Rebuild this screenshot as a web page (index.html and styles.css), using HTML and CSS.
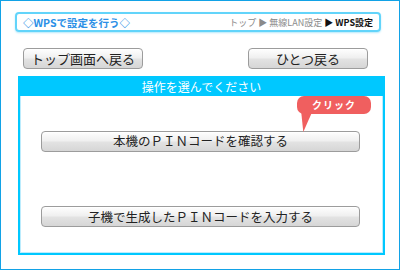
FILE: index.html
```html
<!DOCTYPE html>
<html lang="ja">
  <head>
    <meta charset="UTF-8">
    <title>WPSで設定を行う</title>
    <link rel="stylesheet" href="styles.css">
  </head>
  <body>
    <div class="screen">
      <div class="title-bar">
        <span class="title">◇WPSで設定を行う◇</span>
        <span class="crumbs">トップ ▶ 無線LAN設定 <b>▶ WPS設定</b></span>
      </div>
      <div class="nav">
        <button class="btn small">トップ画面へ戻る</button>
        <button class="btn small">ひとつ戻る</button>
      </div>
      <div class="panel">
        <div class="panel-head">操作を選んでください</div>
        <div class="panel-body">
          <div class="action">
            <button class="btn wide">本機のＰＩＮコードを確認する</button>
            <div class="callout">クリック</div>
          </div>
          <div class="action">
            <button class="btn wide">子機で生成したＰＩＮコードを入力する</button>
          </div>
        </div>
      </div>
    </div>
  </body>
</html>
```
FILE: styles.css
```css
* {padding: 0; margin: 0; box-sizing: border-box}
body {
  font-family: "Noto Sans CJK JP", "Liberation Sans", sans-serif;
  background: #fff;
}
.screen {
  width: 400px;
  height: 270px;
  border: solid 1px #12a2e6;
  padding: 11px 0 0 14px;
}
.title-bar {
  width: 366px;
  height: 20px;
  border: solid 2px #62d4fa;
  border-radius: 4px;
  box-shadow: 0 1px 2px #b5e9fb;
  display: flex;
  align-items: center;
  justify-content: space-between;
  padding: 0 6px 0 6px;
}
.title {
  color: #2a8fe6;
  font-size: 10.5px;
  font-weight: bold;
}
.crumbs {
  color: #8a8a8a;
  font-size: 9px;
}
.crumbs b {
  color: #111;
  font-weight: bold;
}
.nav {
  display: flex;
  justify-content: space-between;
  margin: 16px 0 0 8px;
  width: 345px;
}
.btn {
  font-family: "Noto Sans CJK JP", "Liberation Sans", sans-serif;
  color: #222;
  height: 21px;
  border: solid 1px #9c9c9c;
  border-radius: 4px;
  background: linear-gradient(#fefefe, #f0f0f0 45%, #e2e2e2 55%, #d6d6d6);
  box-shadow: inset 0 1px 0 #fff;
  line-height: 18px;
}
.small {
  width: 120px;
  font-size: 13px;
}
.panel {
  margin: 7px 0 0 3px;
  width: 367px;
  height: 179px;
  border: solid 2px #00c8ff;
  box-shadow: inset 0 0 0 1px #bcecfd;
}
.panel-head {
  background: #00c8ff;
  color: #fff;
  font-size: 12px;
  height: 18px;
  line-height: 18px;
  text-align: center;
}
.panel-body {
  padding: 31px 0 0 21px;
  display: flex;
  flex-direction: column;
  gap: 51px;
}
.action {
  position: relative;
}
.wide {
  width: 319px;
  font-size: 12.5px;
}
.callout {
  position: absolute;
  left: 256px;
  top: -31px;
  width: 74px;
  height: 18px;
  z-index: 2;
  border-radius: 7px;
  background: #f05f5f;
  color: #fff;
  font-size: 10px;
  font-weight: bold;
  text-align: center;
  line-height: 18px;
  letter-spacing: 1px;
}
.callout::after {
  content: "";
  position: absolute;
  left: 4px;
  top: 14px;
  width: 0;
  height: 0;
  border-top: 22px solid #f05f5f;
  border-right: 12px solid transparent;
  transform: skewX(6deg);
  transform-origin: top left;
}
```
